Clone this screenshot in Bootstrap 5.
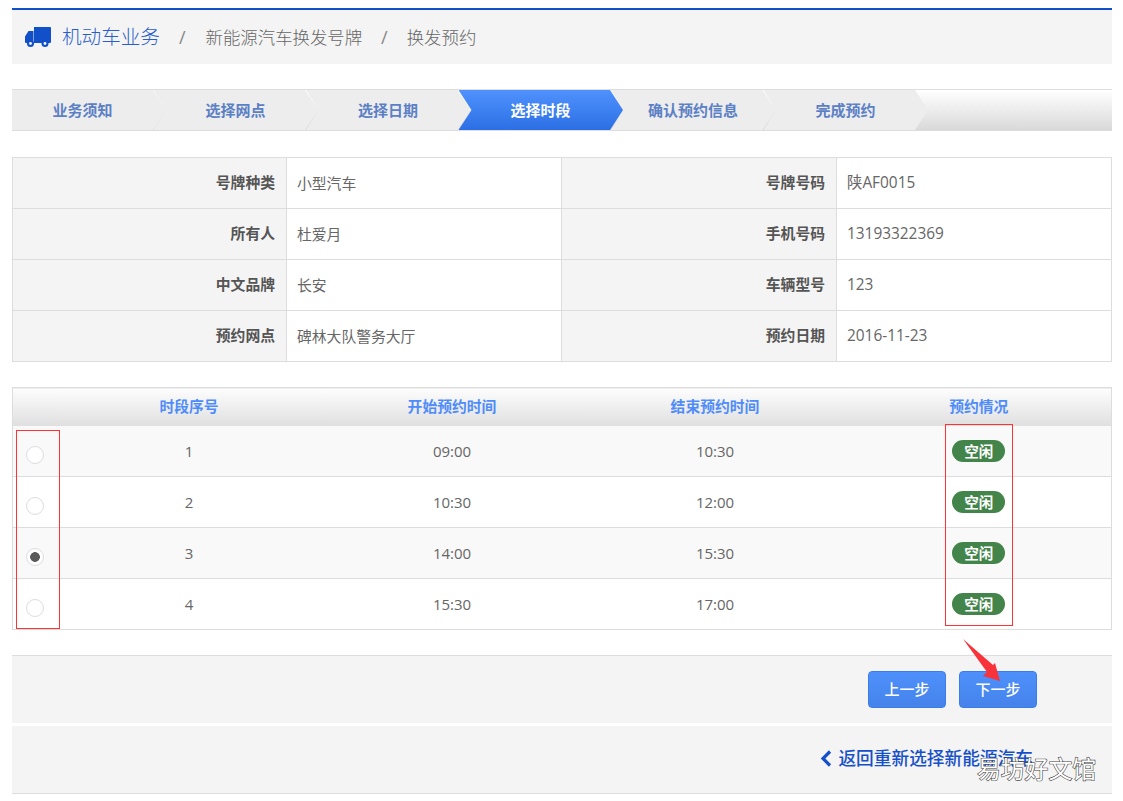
<!DOCTYPE html>
<html lang="zh-CN">
<head>
<meta charset="utf-8">
<title>换发预约</title>
<link rel="stylesheet" href="https://cdn.jsdelivr.net/npm/bootstrap@5.3.0/dist/css/bootstrap.min.css">
<style>
body{background:#fff;font-family:"Open Sans","Noto Sans CJK SC",sans-serif;font-size:15px;color:#555;}
.pagewrap{width:1100px;margin-left:12px;padding-top:8px;position:relative;height:801px;}
.crumbbar{height:56px;background:#f4f4f4;border-top:2px solid #1150c8;padding-left:13px;margin-bottom:25px;}
.crumbicon{width:26px;height:20px;margin-right:11px;}
.crumbmain{font-size:19.6px;color:#2a5ecb;font-weight:300;}
.crumbsep{color:#888;font-size:18px;margin:0 19px;}
.crumbsep.firstsep{margin-right:20px;}
.crumbtxt{font-size:17.4px;color:#666;font-weight:300;}
.stepsbar{height:42px;background:linear-gradient(#fff,#d9d9d9);border-top:1px solid #ddd;border-bottom:1px solid #ddd;margin-bottom:26px;}
.stepitem{flex:0 0 166px;margin-right:-13.5px;padding:1px 14px 0 12px;height:40px;background:#ededed;color:#5b80c6;font-weight:700;font-size:15px;
 clip-path:polygon(0 0,151.500px 0,164.500px 50%,151.500px 100%,0 100%,13px 50%);}
.stepitem.firststep{flex-basis:155px;padding-left:0;padding-right:14px;clip-path:polygon(0 0,141px 0,154px 50%,141px 100%,0 100%);}
.stepitem.curstep{background:linear-gradient(#4f92fd,#2c6fe4);color:#fff;}
.infotbl{--bs-border-color:#ddd;table-layout:fixed;margin-bottom:25px;}
.infotbl td{height:51px;padding:0 10px;vertical-align:middle;font-size:14.8px;color:#666;}
.infotbl td:nth-child(1){width:274px;}
.infotbl td:nth-child(2),.infotbl td:nth-child(3){width:275px;}
.infotbl td.lblcell{background:#f4f4f4;text-align:right;font-weight:700;color:#555;padding:0 11px 2px 0;}
.infotbl td.numval{font-size:15.4px;}
.slottbl{--bs-table-striped-bg:#f9f9f9;--bs-table-striped-color:#666;--bs-border-color:#ddd;table-layout:fixed;border:1px solid #ddd;margin-bottom:25px;}
.slottbl .radiocol{width:45px;}
.slottbl .timecol{width:263px;}
.slottbl thead th{height:38px;padding:0 0 2px;border-bottom:0;text-align:center;vertical-align:middle;color:#4f8cfb;font-size:14.8px;font-weight:700;background:linear-gradient(#fdfdfd,#dfdfdf);}
.slottbl td{height:51px;padding:0;text-align:center;vertical-align:middle;font-size:15px;color:#666;}
.slottbl tr:last-child td{border-bottom:0;}
.slottbl .form-check-input{width:18px;height:18px;margin:8px 0 0 0;border:1px solid #ddd;background:#fff;box-shadow:none;}
.slottbl .form-check-input:checked{background-color:#fff;border-color:#ddd;background-image:radial-gradient(circle,#5a5a5a 0,#5a5a5a 4.5px,transparent 5.2px);background-size:auto;}
.freetag{display:inline-block;width:53px;height:22px;line-height:22px;margin-top:-2px;border-radius:11px;background:#43844a;color:#fff;font-size:14.6px;font-weight:700;}
.actionband{height:68px;background:#f4f4f4;border-top:1px solid #ddd;padding-right:75px;margin-bottom:3px;gap:13px;}
.stepbtn{width:78px;height:37px;padding:0;background:linear-gradient(#4e90fc,#4583ea);border:1px solid #3b7de6;color:#fff;font-size:15px;border-radius:4px;font-weight:500;}
.backband{height:68px;background:#f4f4f4;border-bottom:1px solid #ddd;padding-right:79px;padding-bottom:2px;}
.backlink{color:#1650c8;font-size:17.7px;text-decoration:none;font-weight:500;}
.backlink svg{width:12px;height:17px;margin-right:6px;vertical-align:-2px;}
.redframe{position:absolute;border:1px solid #f33;}
.frameone{left:4px;top:430px;width:44px;height:199px;}
.frametwo{left:933px;top:424px;width:68px;height:202px;}
.redarrow{position:absolute;left:948px;top:636px;width:44px;height:48px;}
.watermark{position:absolute;left:965px;top:750px;font-size:23.8px;line-height:36px;color:#fff;-webkit-text-stroke:1.2px #444;paint-order:stroke fill;font-family:"Noto Sans CJK SC",sans-serif;white-space:nowrap;}
</style>
</head>
<body>
<div class="pagewrap">
  <div class="crumbbar d-flex align-items-center">
    <svg class="crumbicon" viewBox="0 0 26 20"><path fill="#1150c8" d="M9 0h16a1 1 0 0 1 1 1v14a1 1 0 0 1-1 1H9zM8.500 4v12H1a1 1 0 0 1-1-1V9.500L3.500 4z"/><circle cx="5.500" cy="16.500" r="3.500" fill="#1150c8"/><circle cx="20" cy="16.500" r="3.500" fill="#1150c8"/><circle cx="5.500" cy="16.500" r="1.400" fill="#f4f4f4"/><circle cx="20" cy="16.500" r="1.400" fill="#f4f4f4"/></svg>
    <span class="crumbmain">机动车业务</span>
    <span class="crumbsep firstsep">/</span>
    <span class="crumbtxt">新能源汽车换发号牌</span>
    <span class="crumbsep">/</span>
    <span class="crumbtxt">换发预约</span>
  </div>

  <div class="stepsbar d-flex">
    <div class="stepitem firststep d-flex align-items-center justify-content-center">业务须知</div>
    <div class="stepitem d-flex align-items-center justify-content-center">选择网点</div>
    <div class="stepitem d-flex align-items-center justify-content-center">选择日期</div>
    <div class="stepitem curstep d-flex align-items-center justify-content-center">选择时段</div>
    <div class="stepitem d-flex align-items-center justify-content-center">确认预约信息</div>
    <div class="stepitem d-flex align-items-center justify-content-center">完成预约</div>
  </div>

  <table class="table table-bordered infotbl">
    <tbody>
      <tr><td class="lblcell">号牌种类</td><td>小型汽车</td><td class="lblcell">号牌号码</td><td class="numval">陕AF0015</td></tr>
      <tr><td class="lblcell">所有人</td><td>杜爱月</td><td class="lblcell">手机号码</td><td class="numval">13193322369</td></tr>
      <tr><td class="lblcell">中文品牌</td><td>长安</td><td class="lblcell">车辆型号</td><td class="numval">123</td></tr>
      <tr><td class="lblcell">预约网点</td><td>碑林大队警务大厅</td><td class="lblcell">预约日期</td><td class="numval">2016-11-23</td></tr>
    </tbody>
  </table>

  <table class="table table-striped slottbl">
    <colgroup><col class="radiocol"><col class="timecol"><col class="timecol"><col class="timecol"><col></colgroup>
    <thead><tr><th></th><th>时段序号</th><th>开始预约时间</th><th>结束预约时间</th><th>预约情况</th></tr></thead>
    <tbody>
      <tr><td><input class="form-check-input" type="radio" name="slot"></td><td>1</td><td>09:00</td><td>10:30</td><td><span class="freetag">空闲</span></td></tr>
      <tr><td><input class="form-check-input" type="radio" name="slot"></td><td>2</td><td>10:30</td><td>12:00</td><td><span class="freetag">空闲</span></td></tr>
      <tr><td><input class="form-check-input" type="radio" name="slot" checked></td><td>3</td><td>14:00</td><td>15:30</td><td><span class="freetag">空闲</span></td></tr>
      <tr><td><input class="form-check-input" type="radio" name="slot"></td><td>4</td><td>15:30</td><td>17:00</td><td><span class="freetag">空闲</span></td></tr>
    </tbody>
  </table>

  <div class="actionband d-flex align-items-center justify-content-end">
    <button type="button" class="btn stepbtn">上一步</button>
    <button type="button" class="btn stepbtn">下一步</button>
  </div>
  <div class="backband d-flex align-items-center justify-content-end">
    <a class="backlink" href="#"><svg viewBox="0 0 12 17"><path d="M10 1.500 3 8.500l7 7" fill="none" stroke="#1650c8" stroke-width="3.200"/></svg>返回重新选择新能源汽车</a>
  </div>

  <div class="redframe frameone"></div>
  <div class="redframe frametwo"></div>
  <svg class="redarrow" viewBox="0 0 44 48"><polygon fill="#f8333a" points="3,3 33,29 35,27 40,45 23,40 27,36"/></svg>
  <div class="watermark">易坊好文馆</div>
</div>
<script src="https://cdn.jsdelivr.net/npm/bootstrap@5.3.0/dist/js/bootstrap.bundle.min.js"></script>
</body>
</html>
